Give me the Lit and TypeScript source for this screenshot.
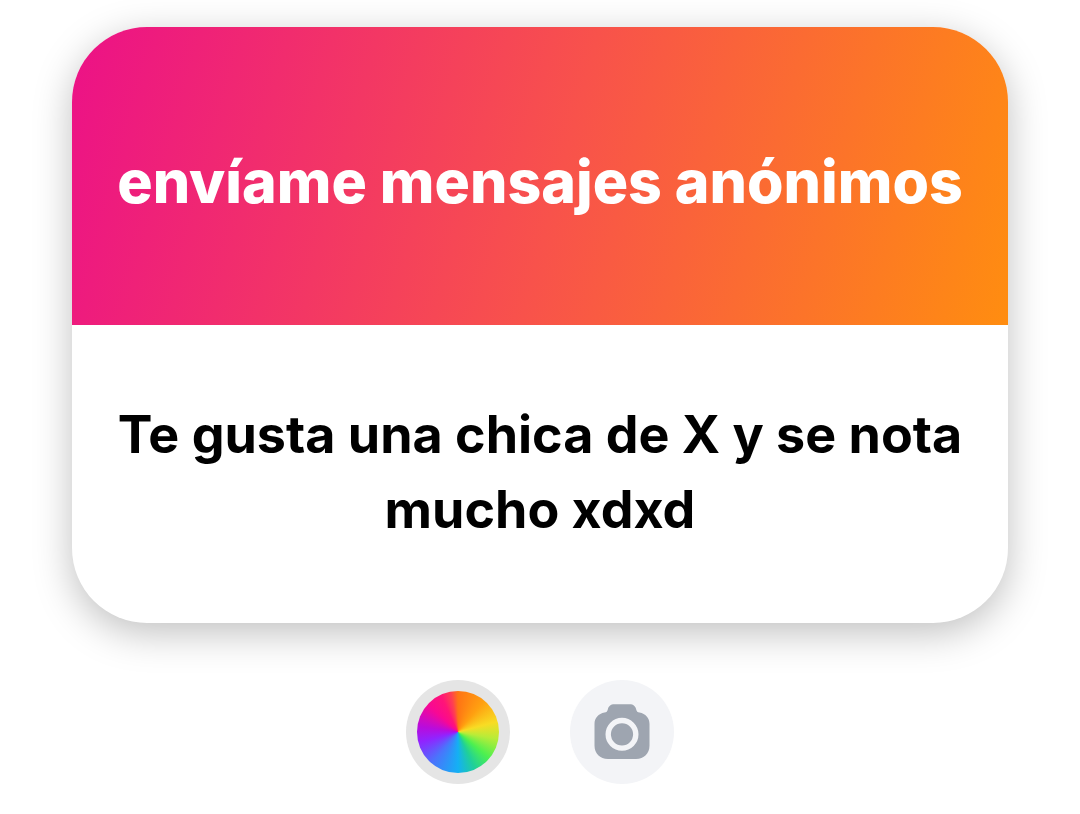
import { LitElement, html, css } from "lit";
import { customElement } from "lit/decorators.js";

@customElement("app-root")
export class AppRoot extends LitElement {
  static styles = css`
    :host {
      display: block;
      min-height: 100vh;
      box-sizing: border-box;
      padding: 27px 72px 30px;
      background: #fff;
      font-family: Inter, "Liberation Sans", sans-serif;
      text-align: center;
    }
    .card {
      border-radius: 75px;
      overflow: hidden;
      background: #fff;
      box-shadow: 0 10px 38px rgba(0, 0, 0, 0.25);
    }
    .prompt,
    .message {
      box-sizing: border-box;
      min-height: 298px;
      padding: 24px 36px;
      display: flex;
      align-items: center;
      justify-content: center;
    }
    .prompt {
      padding-top: 36px;
      background: linear-gradient(105deg, #ec1187 0%, #f8524b 52%, #ff8d10 100%);
    }
    .message {
      padding-bottom: 28px;
    }
    h1 {
      margin: 0;
      color: #fff;
      font-size: 59px;
      line-height: 72px;
      font-weight: 800;
    }
    p {
      margin: 0;
      color: #000;
      font-size: 52px;
      line-height: 75px;
      font-weight: 700;
    }
    .tools {
      display: flex;
      justify-content: center;
      gap: 60px;
      padding-top: 57px;
    }
    button {
      width: 104px;
      height: 104px;
      padding: 0;
      border: 0;
      border-radius: 50%;
      display: grid;
      place-items: center;
      background: #f3f4f7;
      cursor: pointer;
    }
    .color {
      background: #e5e5e5;
    }
    .wheel {
      width: 82px;
      height: 82px;
      border-radius: 50%;
      background: conic-gradient(
        #ff7414,
        #ffa010 40deg,
        #f8dc24 75deg,
        #b8ec38 100deg,
        #4cf050 130deg,
        #20d098 155deg,
        #14b0f4 180deg,
        #4a74fc 220deg,
        #9024ff 255deg,
        #b80cdc 278deg,
        #f80894 312deg,
        #ff1478 335deg,
        #ff4050 350deg,
        #ff7414
      );
    }
  `;

  render() {
    return html`
      <main>
        <article class="card">
          <header class="prompt"><h1>envíame mensajes anónimos</h1></header>
          <div class="message"><p>Te gusta una chica de X y se nota mucho xdxd</p></div>
        </article>
        <div class="tools">
          <button class="color" type="button" aria-label="Color"><span class="wheel"></span></button>
          <button type="button" aria-label="Cámara">
            <svg width="56" height="56" viewBox="0 0 56 56" aria-hidden="true">
              <path
                fill="#9ea5b0"
                d="M20.500 .2h15c4 0 6 2 6.700 5.200.5 2 1.300 2.800 3.300 3.100C51.500 9.500 55.500 14 55.500 20v21.500c0 8-5.500 13.500-13.500 13.500H14C6 55 .5 49.500 .5 41.500V20c0-6 4-10.500 10-11.500 2-.3 2.800-1.100 3.300-3.100C14.500 2.200 16.500.2 20.500.2z"
              />
              <circle cx="28" cy="30.300" r="13.800" fill="#9ea5b0" stroke="#f3f4f7" stroke-width="5.400" />
            </svg>
          </button>
        </div>
      </main>
    `;
  }
}
